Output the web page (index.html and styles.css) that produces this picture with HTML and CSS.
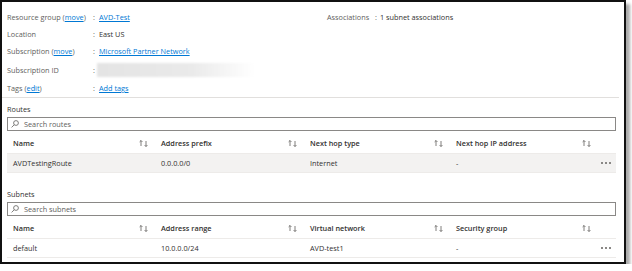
FILE: index.html
```html
<!doctype html>
<html lang="en">
    <head>
        <meta charset="utf-8">
        <link rel="stylesheet" href="styles.css">
    </head>
    <body>
        <div class="Marco">
            <!-- Datos generales de la tabla de rutas -->
            <div class="Esenciales">
                <div class="Columna">
                    <div class="Campo">
                        <span class="Etiqueta">Resource group (<a href="#">move</a>)</span>
                        <span class="DosPuntos">:</span>
                        <a class="Valor" href="#">AVD-Test</a>
                    </div>
                    <div class="Campo">
                        <span class="Etiqueta">Location</span>
                        <span class="DosPuntos">:</span>
                        <span class="Valor">East US</span>
                    </div>
                    <div class="Campo Alto">
                        <span class="Etiqueta">Subscription (<a href="#">move</a>)</span>
                        <span class="DosPuntos">:</span>
                        <a class="Valor" href="#">Microsoft Partner Network</a>
                    </div>
                    <div class="Campo MasAlto">
                        <span class="Etiqueta">Subscription ID</span>
                        <span class="DosPuntos">:</span>
                        <span class="Valor"><span class="Oculto"></span></span>
                    </div>
                    <div class="Campo Alto">
                        <span class="Etiqueta">Tags (<a href="#">edit</a>)</span>
                        <span class="DosPuntos">:</span>
                        <a class="Valor" href="#">Add tags</a>
                    </div>
                </div>
                <div class="Columna Derecha">
                    <div class="Campo">
                        <span class="Etiqueta">Associations</span>
                        <span class="DosPuntos">:</span>
                        <span class="Valor">1 subnet associations</span>
                    </div>
                </div>
            </div>

            <!-- Rutas -->
            <div class="Bloque">
                <div class="Titulo">Routes</div>
                <div class="Buscar">
                    <svg viewBox="0 0 8 8" width="8" height="8"><circle cx="5" cy="3" r="2.4" fill="none" stroke="#605e5c" stroke-width="0.8"/><line x1="3.2" y1="4.8" x2="0.6" y2="7.4" stroke="#605e5c" stroke-width="0.8"/></svg>
                    <span>Search routes</span>
                </div>
                <div class="Fila Cabecera">
                    <div class="Celda">Name<svg class="Orden" viewBox="0 0 9 7" width="9" height="7"><path d="M2 6V0.5M0.6 1.9L2 0.5L3.4 1.9M7 1V6.5M5.6 5.1L7 6.5L8.4 5.1" fill="none" stroke="#605e5c" stroke-width="0.8"/></svg></div>
                    <div class="Celda">Address prefix<svg class="Orden" viewBox="0 0 9 7" width="9" height="7"><path d="M2 6V0.5M0.6 1.9L2 0.5L3.4 1.9M7 1V6.5M5.6 5.1L7 6.5L8.4 5.1" fill="none" stroke="#605e5c" stroke-width="0.8"/></svg></div>
                    <div class="Celda">Next hop type<svg class="Orden" viewBox="0 0 9 7" width="9" height="7"><path d="M2 6V0.5M0.6 1.9L2 0.5L3.4 1.9M7 1V6.5M5.6 5.1L7 6.5L8.4 5.1" fill="none" stroke="#605e5c" stroke-width="0.8"/></svg></div>
                    <div class="Celda">Next hop IP address<svg class="Orden" viewBox="0 0 9 7" width="9" height="7"><path d="M2 6V0.5M0.6 1.9L2 0.5L3.4 1.9M7 1V6.5M5.6 5.1L7 6.5L8.4 5.1" fill="none" stroke="#605e5c" stroke-width="0.8"/></svg></div>
                    <div class="Celda"></div>
                </div>
                <div class="Fila Marcada">
                    <div class="Celda">AVDTestingRoute</div>
                    <div class="Celda">0.0.0.0/0</div>
                    <div class="Celda">Internet</div>
                    <div class="Celda">-</div>
                    <div class="Celda Puntos"><i></i><i></i><i></i></div>
                </div>
            </div>

            <!-- Subredes -->
            <div class="Bloque Segundo">
                <div class="Titulo">Subnets</div>
                <div class="Buscar">
                    <svg viewBox="0 0 8 8" width="8" height="8"><circle cx="5" cy="3" r="2.4" fill="none" stroke="#605e5c" stroke-width="0.8"/><line x1="3.2" y1="4.8" x2="0.6" y2="7.4" stroke="#605e5c" stroke-width="0.8"/></svg>
                    <span>Search subnets</span>
                </div>
                <div class="Fila Cabecera">
                    <div class="Celda">Name<svg class="Orden" viewBox="0 0 9 7" width="9" height="7"><path d="M2 6V0.5M0.6 1.9L2 0.5L3.4 1.9M7 1V6.5M5.6 5.1L7 6.5L8.4 5.1" fill="none" stroke="#605e5c" stroke-width="0.8"/></svg></div>
                    <div class="Celda">Address range<svg class="Orden" viewBox="0 0 9 7" width="9" height="7"><path d="M2 6V0.5M0.6 1.9L2 0.5L3.4 1.9M7 1V6.5M5.6 5.1L7 6.5L8.4 5.1" fill="none" stroke="#605e5c" stroke-width="0.8"/></svg></div>
                    <div class="Celda">Virtual network<svg class="Orden" viewBox="0 0 9 7" width="9" height="7"><path d="M2 6V0.5M0.6 1.9L2 0.5L3.4 1.9M7 1V6.5M5.6 5.1L7 6.5L8.4 5.1" fill="none" stroke="#605e5c" stroke-width="0.8"/></svg></div>
                    <div class="Celda">Security group<svg class="Orden" viewBox="0 0 9 7" width="9" height="7"><path d="M2 6V0.5M0.6 1.9L2 0.5L3.4 1.9M7 1V6.5M5.6 5.1L7 6.5L8.4 5.1" fill="none" stroke="#605e5c" stroke-width="0.8"/></svg></div>
                    <div class="Celda"></div>
                </div>
                <div class="Fila">
                    <div class="Celda">default</div>
                    <div class="Celda">10.0.0.0/24</div>
                    <div class="Celda">AVD-test1</div>
                    <div class="Celda">-</div>
                    <div class="Celda Puntos"><i></i><i></i><i></i></div>
                </div>
            </div>
        </div>
    </body>
</html>
```

FILE: styles.css
```css
body {
    margin:0;
    background:#FFF;
    font-family:"Open Sans", "Noto Sans", sans-serif;
    font-size:7.3px;
    color:#323130;
}
a { color:#0078D4; text-decoration:underline; }

/* Marco con borde negro y sombra */
.Marco {
    box-sizing:border-box;
    width:626px;
    height:264px;
    border:2px solid #111;
    box-shadow:4px 4px 3px #AAA;
    padding:0 8px 0 5px;
    overflow:hidden;
}

/* Datos generales */
.Esenciales {
    display:grid;
    grid-template-columns:320px 1fr;
    padding-top:6px;
    margin:0 -3px 0 -5px;
    padding-left:5px;
    border-bottom:1px solid #E1DFDD;
}
.Campo {
    display:grid;
    grid-template-columns:86px 6px 1fr;
    align-items:center;
    height:17px;
}
.Campo.Alto                         { height:18px; }
.Campo.MasAlto                      { height:19px; }
.Derecha .Campo                     { grid-template-columns:48px 5px 1fr; }
.Etiqueta                           { color:#605E5C; }
.DosPuntos                          { color:#605E5C; }
.Oculto {
    display:block;
    width:158px;
    height:14px;
    margin-left:-2px;
    background:linear-gradient(to right, #E4E4E4, #EAEAEA 60%, #FFF);
    filter:blur(1px);
}

/* Bloques de tablas */
.Bloque                             { margin-top:5px; }
.Bloque.Segundo                     { margin-top:15px; }
.Titulo {
    height:12px;
    line-height:12px;
    color:#323130;
    margin-bottom:2px;
}
.Buscar {
    box-sizing:border-box;
    height:14px;
    border:1px solid #8A8886;
    display:flex;
    align-items:center;
    gap:5px;
    padding-left:3px;
    color:#605E5C;
}
.Fila {
    display:grid;
    grid-template-columns:148px 149px 146px 148px 1fr;
    height:18px;
    border-bottom:1px solid #EDEBE9;
    align-items:center;
}
.Fila.Cabecera {
    box-sizing:border-box;
    height:23px;
    padding-top:2px;
    font-weight:600;
}
.Fila.Marcada                       { background:#F3F2F1; }
.Celda {
    display:flex;
    align-items:center;
    justify-content:space-between;
    padding:0 7px 0 6px;
}
.Orden                              { flex:none; }
.Puntos {
    justify-content:flex-start;
    gap:2px;
    padding:0 0 0 3px;
}
.Puntos i {
    width:2px;
    height:2px;
    background:#8A8886;
}
```
